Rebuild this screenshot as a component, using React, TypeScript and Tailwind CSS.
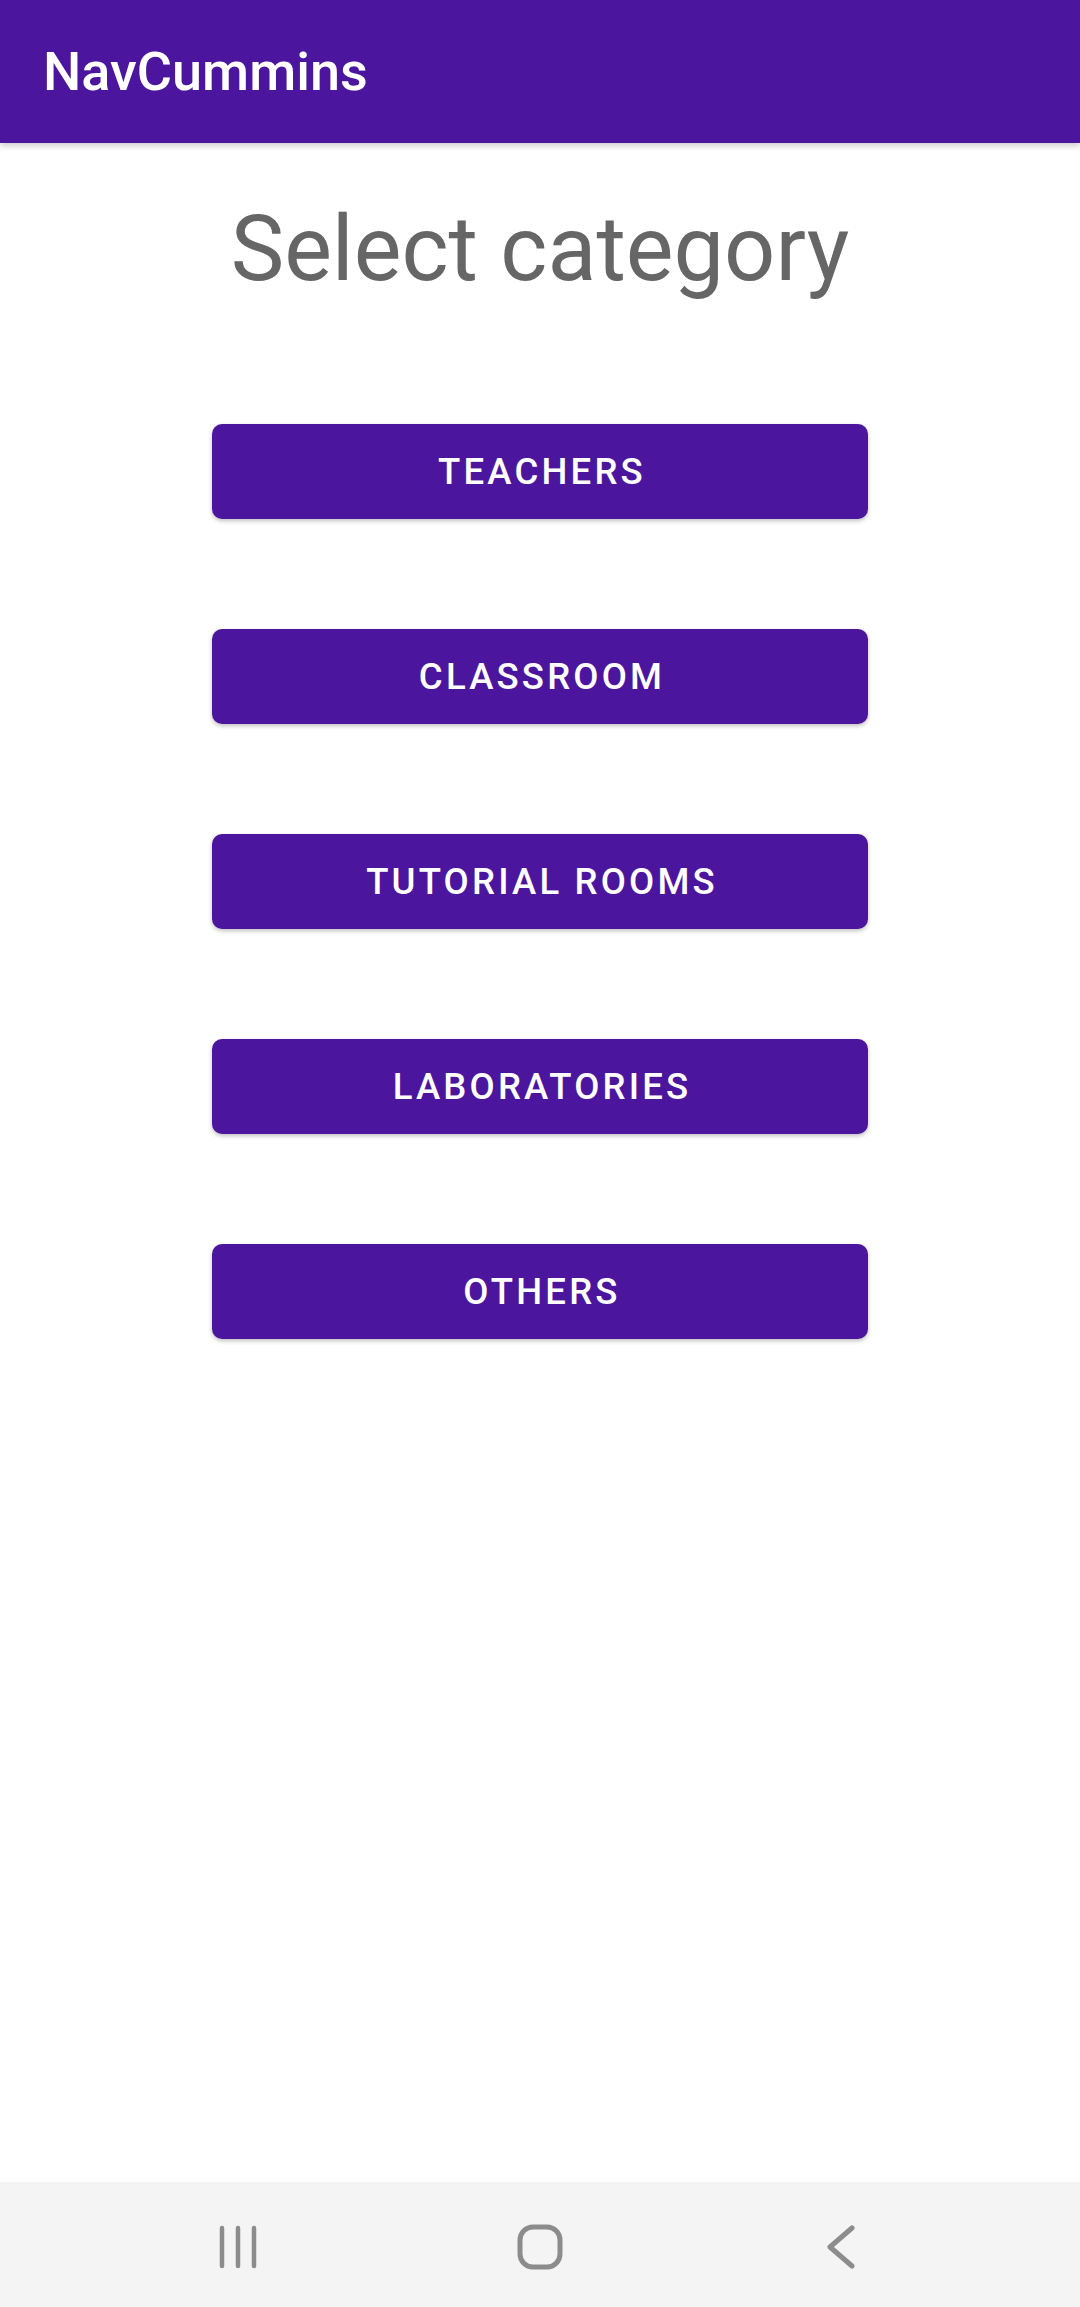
import React from "react";

const categories = ["TEACHERS", "CLASSROOM", "TUTORIAL ROOMS", "LABORATORIES", "OTHERS"];

export default function App() {
  return (
    <div className="w-[1080px] h-[2307px] flex flex-col bg-white font-['Roboto','Noto_Sans',sans-serif] overflow-hidden">
      <header className="relative z-10 h-[143px] shrink-0 bg-[#4b159e] flex items-center pl-[43px] shadow-[0_3px_6px_rgba(0,0,0,0.2)]">
        <h1 className="text-white text-[54px] font-medium leading-none">NavCummins</h1>
      </header>
      <main className="flex-1 flex flex-col items-center">
        <h2 className="mt-[54px] text-[90px] leading-[105px] text-[#666666] font-normal">Select category</h2>
        <div className="mt-[122px] flex flex-col gap-[110px]">
          {categories.map((c) => (
            <button
              key={c}
              className="w-[656px] h-[95px] rounded-[10px] bg-[#4b159e] text-white text-[36.5px] font-medium tracking-[3.2px] pl-[4px] pt-[2px] flex items-center justify-center shadow-[0_2px_4px_rgba(0,0,0,0.25)]"
            >
              {c}
            </button>
          ))}
        </div>
      </main>
      <nav className="h-[125px] shrink-0 bg-[#f4f4f4] flex items-center justify-center gap-[202px] pt-[5px]">
        <div className="w-[100px] h-[50px] flex items-center justify-center">
          <svg width="44" height="44" viewBox="0 0 44 44" fill="none" stroke="#8c8c8c" strokeWidth="4.5" strokeLinecap="round">
            <line x1="6" y1="3" x2="6" y2="41" />
            <line x1="22" y1="3" x2="22" y2="41" />
            <line x1="38" y1="3" x2="38" y2="41" />
          </svg>
        </div>
        <div className="w-[100px] h-[50px] flex items-center justify-center">
          <svg width="46" height="46" viewBox="0 0 46 46" fill="none" stroke="#8c8c8c" strokeWidth="5">
            <rect x="3" y="3" width="40" height="40" rx="13" />
          </svg>
        </div>
        <div className="w-[100px] h-[50px] flex items-center justify-center">
          <svg width="30" height="44" viewBox="0 0 30 44" fill="none" stroke="#8c8c8c" strokeWidth="5" strokeLinecap="round" strokeLinejoin="round">
            <polyline points="25,3 3,22 25,41" />
          </svg>
        </div>
      </nav>
    </div>
  );
}
